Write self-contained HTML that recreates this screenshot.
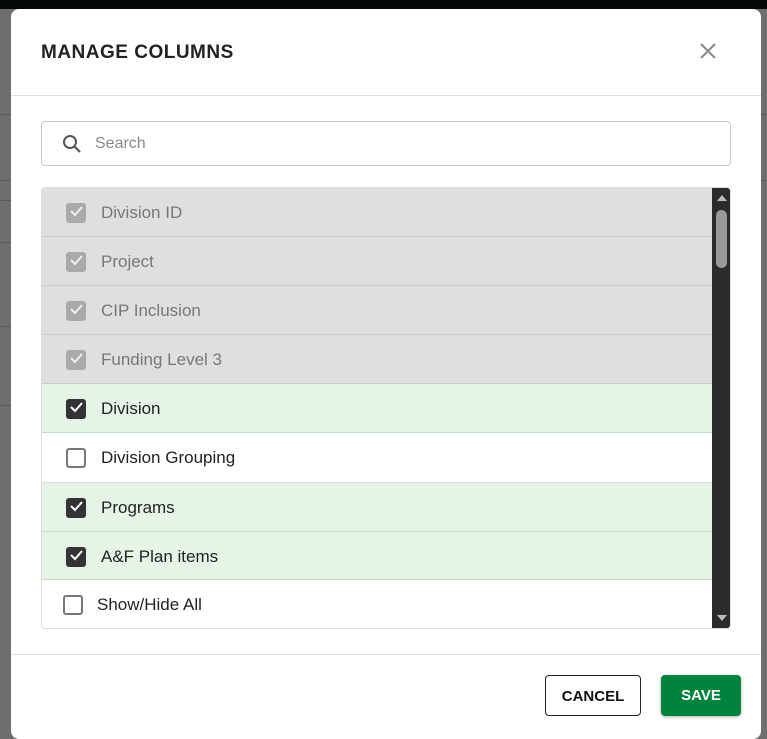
<!DOCTYPE html>
<html><head><style>
*{box-sizing:border-box;margin:0;padding:0}
body{width:767px;height:725px;overflow:hidden;background:#6e6e6e;font-family:"Liberation Sans",sans-serif;position:relative}
.top{position:absolute;left:0;top:0;width:767px;height:9px;background:#050808}
.bgl{position:absolute;left:0;width:11px;height:1px;background:#5a5a5a}
.bgr{position:absolute;right:0;width:7px;height:1px;background:#5a5a5a}
.modal{position:absolute;left:11px;top:9px;width:750px;height:730px;background:#fff;border-radius:8px}
.title{position:absolute;left:30px;top:33px;font-size:19px;font-weight:bold;color:#222;letter-spacing:.5px}
.close{position:absolute;left:688px;top:33px}
.hr1{position:absolute;left:0;top:86px;width:750px;height:1px;background:#e0e0e0}
.search{position:absolute;left:30px;top:112px;width:690px;height:45px;border:1px solid #c8c8c8;border-radius:4px}
.search span{position:absolute;left:53px;top:13px;font-size:16px;color:#888}
.list{position:absolute;left:30px;top:178px;width:690px;height:442px;border:1px solid #ddd;border-radius:4px;overflow:hidden}
.row{position:absolute;left:0;width:670px;height:49px;border-bottom:1px solid #ccc;font-size:17px}
.row span{position:absolute;left:59px;top:15px}
.cb{position:absolute;left:24px;top:15px;width:20px;height:20px;border-radius:3px}
.g{background:#dfdfdf;color:#777}.g .cb{background:#aaa}
.s{background:#e6f4e8;color:#222;border-bottom-color:#c6dccb}.s .cb{background:#333}
.w{background:#fff;color:#222;border-bottom-color:#ddd}.w .cb{border:2px solid #777}
.sb{position:absolute;left:670px;top:0;width:20px;height:442px;background:#2b2b2b}
.thumb{position:absolute;left:4px;top:22px;width:11px;height:58px;background:#9a9a9a;border-radius:6px}
.hr2{position:absolute;left:0;top:645px;width:750px;height:1px;background:#e0e0e0}
.btn{position:absolute;top:666px;height:41px;border-radius:4px;font-size:15px;font-weight:bold;text-align:center;line-height:41px}
</style></head><body>
<div class="top"></div>
<div class="bgl" style="top:114px"></div><div class="bgl" style="top:180px"></div><div class="bgl" style="top:200px"></div><div class="bgl" style="top:242px"></div><div class="bgl" style="top:326px"></div><div class="bgl" style="top:405px"></div>
<div class="bgr" style="top:114px"></div><div class="bgr" style="top:180px"></div>
<div class="modal">
<div class="title">MANAGE COLUMNS</div>
<svg class="close" width="18" height="18" viewBox="0 0 18 18"><path d="M2 2L16 16M16 2L2 16" stroke="#888" stroke-width="2"/></svg>
<div class="hr1"></div>
<div class="search"><svg style="position:absolute;left:20px;top:12px" width="20" height="20" viewBox="0 0 20 20"><circle cx="8" cy="8" r="6" fill="none" stroke="#555" stroke-width="2"/><path d="M12.5 12.5L18 18" stroke="#555" stroke-width="2.2"/></svg><span>Search</span></div>
<div class="list">
<div class="row g" style="top:0"><div class="cb"></div><span>Division ID</span></div>
<div class="row g" style="top:49px"><div class="cb"></div><span>Project</span></div>
<div class="row g" style="top:98px"><div class="cb"></div><span>CIP Inclusion</span></div>
<div class="row g" style="top:147px"><div class="cb"></div><span>Funding Level 3</span></div>
<div class="row s" style="top:196px"><div class="cb"></div><span>Division</span></div>
<div class="row w" style="top:245px;height:50px"><div class="cb"></div><span>Division Grouping</span></div>
<div class="row s" style="top:295px"><div class="cb"></div><span>Programs</span></div>
<div class="row s" style="top:344px;height:48px"><div class="cb"></div><span>A&amp;F Plan items</span></div>
<div class="row w" style="top:392px;border:none"><div class="cb" style="left:21px"></div><span style="left:55px">Show/Hide All</span></div>
<svg style="position:absolute;left:0;top:0" width="670" height="442">
<g fill="none" stroke="#eee" stroke-width="2"><path d="M29 23l4 4 7-8"/><path d="M29 72l4 4 7-8"/><path d="M29 121l4 4 7-8"/><path d="M29 170l4 4 7-8"/></g>
<g fill="none" stroke="#fff" stroke-width="2"><path d="M29 219l4 4 7-8"/><path d="M29 318l4 4 7-8"/><path d="M29 367l4 4 7-8"/></g>
</svg>
<div class="sb"><div class="thumb"></div>
<svg style="position:absolute;left:5px;top:6px" width="10" height="8"><path d="M0 7L5 1L10 7Z" fill="#bbb"/></svg>
<svg style="position:absolute;left:5px;top:426px" width="10" height="8"><path d="M0 1L5 7L10 1Z" fill="#bbb"/></svg></div>
</div>
<div class="hr2"></div>
<div class="btn" style="left:534px;width:96px;border:1px solid #222;color:#111">CANCEL</div>
<div class="btn" style="left:650px;width:80px;background:#00843d;color:#fff;box-shadow:0 1px 3px rgba(0,0,0,.3)">SAVE</div>
</div>
</body></html>
